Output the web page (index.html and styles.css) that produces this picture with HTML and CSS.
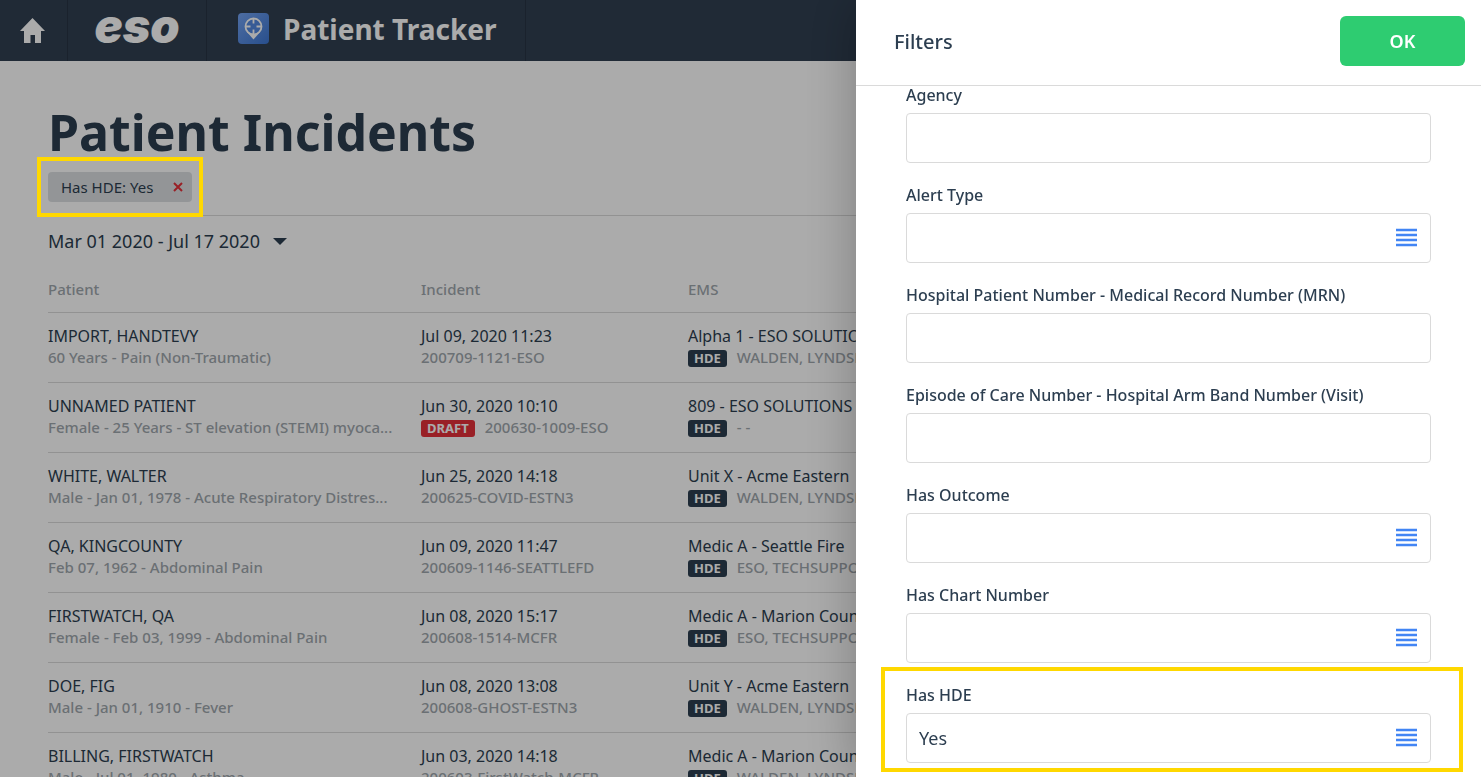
FILE: index.html
```html
<!DOCTYPE html>
<html lang="en">
<head>
<meta charset="utf-8">
<meta name="viewport" content="width=device-width, initial-scale=1.0">
<title>Patient Tracker</title>
<link rel="stylesheet" href="styles.css">
</head>
<body>

<header class="topbar">
  <a class="topbar-home" href="#" aria-label="Home">
    <svg width="25" height="25" viewBox="0 0 25 25"><path fill="currentColor" d="M12.500 0 L25 13 H21 V25 H15 V17 H10.500 V25 H4 V13 H0 Z"/></svg>
  </a>
  <a class="topbar-logo" href="#">eso</a>
  <a class="topbar-app" href="#">
    <svg width="31" height="31" viewBox="0 0 31 31">
      <defs>
        <linearGradient id="tile" x1="0" y1="0" x2="1" y2="1">
          <stop offset="0" stop-color="#74a3f2"/>
          <stop offset="1" stop-color="#3c76d2"/>
        </linearGradient>
      </defs>
      <rect width="31" height="31" rx="4" fill="url(#tile)"/>
      <path d="M9 19 L15.500 26.500 L22 19 Z" fill="#fff"/>
      <circle cx="15.500" cy="13.500" r="8" fill="#5288e0" stroke="#fff" stroke-width="1.800"/>
      <path d="M15.500 5.500 V10.500 M15.500 16.500 V21.500 M7.500 13.500 H12.500 M18.500 13.500 H23.500" stroke="#fff" stroke-width="1.800"/>
    </svg>
    <span>Patient Tracker</span>
  </a>
</header>

<main class="content">
  <h1>Patient Incidents</h1>

  <div class="chips">
    <div class="chip">
      <span>Has HDE: Yes</span>
      <button class="chip-remove" type="button" aria-label="Remove filter">
        <svg width="10" height="10" viewBox="0 0 10 10"><path d="M1 1 L9 9 M9 1 L1 9" stroke="currentColor" stroke-width="2"/></svg>
      </button>
      <div class="highlight highlight-chip"></div>
    </div>
  </div>

  <button class="date-range" type="button">
    Mar 01 2020 - Jul 17 2020
    <svg width="14" height="7" viewBox="0 0 14 7"><path fill="currentColor" d="M0 0 H14 L7 7 Z"/></svg>
  </button>

  <table class="incidents">
    <colgroup>
      <col class="col-patient">
      <col class="col-incident">
      <col>
    </colgroup>
    <thead>
      <tr><th>Patient</th><th>Incident</th><th>EMS</th></tr>
    </thead>
    <tbody>
      <tr>
        <td><div class="main">IMPORT, HANDTEVY</div><div class="sub">60 Years - Pain (Non-Traumatic)</div></td>
        <td><div class="main">Jul 09, 2020 11:23</div><div class="sub">200709-1121-ESO</div></td>
        <td><div class="main">Alpha 1 - ESO SOLUTIONS</div><div class="sub"><span class="tag">HDE</span>WALDEN, LYNDSEY</div></td>
      </tr>
      <tr>
        <td><div class="main">UNNAMED PATIENT</div><div class="sub">Female - 25 Years - ST elevation (STEMI) myoca...</div></td>
        <td><div class="main">Jun 30, 2020 10:10</div><div class="sub"><span class="tag tag-draft">DRAFT</span>200630-1009-ESO</div></td>
        <td><div class="main">809 - ESO SOLUTIONS</div><div class="sub"><span class="tag">HDE</span>- -</div></td>
      </tr>
      <tr>
        <td><div class="main">WHITE, WALTER</div><div class="sub">Male - Jan 01, 1978 - Acute Respiratory Distres...</div></td>
        <td><div class="main">Jun 25, 2020 14:18</div><div class="sub">200625-COVID-ESTN3</div></td>
        <td><div class="main">Unit X - Acme Eastern</div><div class="sub"><span class="tag">HDE</span>WALDEN, LYNDSEY</div></td>
      </tr>
      <tr>
        <td><div class="main">QA, KINGCOUNTY</div><div class="sub">Feb 07, 1962 - Abdominal Pain</div></td>
        <td><div class="main">Jun 09, 2020 11:47</div><div class="sub">200609-1146-SEATTLEFD</div></td>
        <td><div class="main">Medic A - Seattle Fire</div><div class="sub"><span class="tag">HDE</span>ESO, TECHSUPPORT</div></td>
      </tr>
      <tr>
        <td><div class="main">FIRSTWATCH, QA</div><div class="sub">Female - Feb 03, 1999 - Abdominal Pain</div></td>
        <td><div class="main">Jun 08, 2020 15:17</div><div class="sub">200608-1514-MCFR</div></td>
        <td><div class="main">Medic A - Marion County</div><div class="sub"><span class="tag">HDE</span>ESO, TECHSUPPORT</div></td>
      </tr>
      <tr>
        <td><div class="main">DOE, FIG</div><div class="sub">Male - Jan 01, 1910 - Fever</div></td>
        <td><div class="main">Jun 08, 2020 13:08</div><div class="sub">200608-GHOST-ESTN3</div></td>
        <td><div class="main">Unit Y - Acme Eastern</div><div class="sub"><span class="tag">HDE</span>WALDEN, LYNDSEY</div></td>
      </tr>
      <tr>
        <td><div class="main">BILLING, FIRSTWATCH</div><div class="sub">Male - Jul 01, 1980 - Asthma</div></td>
        <td><div class="main">Jun 03, 2020 14:18</div><div class="sub">200603-FirstWatch-MCFR</div></td>
        <td><div class="main">Medic A - Marion County</div><div class="sub"><span class="tag">HDE</span>WALDEN, LYNDSEY</div></td>
      </tr>
    </tbody>
  </table>
</main>

<div class="overlay"></div>

<aside class="panel">
  <div class="panel-header">
    <h2>Filters</h2>
    <button class="ok" type="button">OK</button>
  </div>
  <form class="panel-body">
    <div class="field">
      <label for="agency">Agency</label>
      <input id="agency" type="text">
    </div>
    <div class="field">
      <label for="alertType">Alert Type</label>
      <div class="picker">
        <select id="alertType"><option></option></select>
        <svg width="21" height="19" viewBox="0 0 21 19"><path d="M0 2 H21 M0 7 H21 M0 12 H21 M0 17 H21" stroke="currentColor" stroke-width="2.500"/></svg>
      </div>
    </div>
    <div class="field">
      <label for="mrn">Hospital Patient Number - Medical Record Number (MRN)</label>
      <input id="mrn" type="text">
    </div>
    <div class="field">
      <label for="visit">Episode of Care Number - Hospital Arm Band Number (Visit)</label>
      <input id="visit" type="text">
    </div>
    <div class="field">
      <label for="hasOutcome">Has Outcome</label>
      <div class="picker">
        <select id="hasOutcome"><option></option><option>Yes</option><option>No</option></select>
        <svg width="21" height="19" viewBox="0 0 21 19"><path d="M0 2 H21 M0 7 H21 M0 12 H21 M0 17 H21" stroke="currentColor" stroke-width="2.500"/></svg>
      </div>
    </div>
    <div class="field">
      <label for="hasChart">Has Chart Number</label>
      <div class="picker">
        <select id="hasChart"><option></option><option>Yes</option><option>No</option></select>
        <svg width="21" height="19" viewBox="0 0 21 19"><path d="M0 2 H21 M0 7 H21 M0 12 H21 M0 17 H21" stroke="currentColor" stroke-width="2.500"/></svg>
      </div>
    </div>
    <div class="field">
      <label for="hasHde">Has HDE</label>
      <div class="picker">
        <select id="hasHde"><option></option><option selected>Yes</option><option>No</option></select>
        <svg width="21" height="19" viewBox="0 0 21 19"><path d="M0 2 H21 M0 7 H21 M0 12 H21 M0 17 H21" stroke="currentColor" stroke-width="2.500"/></svg>
      </div>
      <div class="highlight highlight-field"></div>
    </div>
  </form>
</aside>

</body>
</html>
```
FILE: styles.css
```css
* {
  box-sizing: border-box;
}

html, body {
  height: 100%;
}

body {
  margin: 0;
  overflow: hidden;
  background: #fff;
  color: #2c3e50;
  font: 16px "Noto Sans", sans-serif;
}

button, input, select {
  font: inherit;
  color: inherit;
}

/* top bar */
.topbar {
  display: flex;
  height: 61px;
  background: #303f51;
}

.topbar a {
  display: flex;
  align-items: center;
  justify-content: center;
  border-right: 1px solid #273443;
  color: #fff;
  text-decoration: none;
}

.topbar-home {
  width: 68px;
  padding-right: 3px;
}

.topbar .topbar-logo {
  width: 139px;
  padding-bottom: 10px;
  font: italic 900 47px/47px Inter, sans-serif;
}

.topbar-app {
  gap: 14px;
  padding: 0 28px 4px 31px;
  font-size: 28px;
  font-weight: 700;
}

/* page content */
.content {
  padding: 36px 48px 0;
}

h1 {
  margin: 0;
  font-size: 50px;
  font-weight: 700;
  line-height: 70px;
}

.chips {
  display: flex;
  padding: 5px 0 13px;
  border-bottom: 1px solid #dadada;
}

.chip {
  position: relative;
  display: flex;
  align-items: center;
  gap: 20px;
  height: 30px;
  padding: 0 9px 0 13px;
  border-radius: 4px;
  background: #dcdfe2;
  font-size: 15px;
}

.chip-remove {
  display: flex;
  padding: 0;
  border: 0;
  background: none;
  color: #e5303a;
}

.date-range {
  display: flex;
  align-items: center;
  gap: 13px;
  margin-top: 12px;
  padding: 0;
  border: 0;
  background: none;
  font-size: 18px;
  line-height: 26px;
}

/* incidents table */
.incidents {
  width: 100%;
  margin-top: 22px;
  table-layout: fixed;
  border-collapse: collapse;
}

.col-patient {
  width: 373px;
}

.col-incident {
  width: 267px;
}

.incidents th {
  height: 36px;
  padding: 0 0 10px;
  border-bottom: 1px solid #dadada;
  color: #9fa7ad;
  font-size: 15px;
  font-weight: 500;
  line-height: 20px;
  text-align: left;
}

.incidents td {
  height: 70px;
  padding: 12px 0 14px;
  border-bottom: 1px solid #dadada;
  vertical-align: top;
  white-space: nowrap;
}

.main {
  line-height: 22px;
}

.sub {
  display: flex;
  align-items: flex-end;
  gap: 10px;
  color: #9fa7ad;
  font-size: 15px;
  font-weight: 500;
  line-height: 20px;
}

.tag {
  padding: 0 6px;
  border-radius: 3px;
  background: #2c3e50;
  color: #fff;
  font-size: 13px;
  font-weight: 700;
  line-height: 17px;
}

.tag-draft {
  background: #e5303a;
}

.overlay {
  position: fixed;
  inset: 0;
  z-index: 1;
  background: rgba(0, 0, 0, 0.33);
}

/* filter panel */
.panel {
  position: fixed;
  top: 0;
  right: 0;
  bottom: 0;
  z-index: 2;
  display: flex;
  flex-direction: column;
  width: 625px;
  background: #fff;
  box-shadow: 0 0 50px rgba(0, 0, 0, 0.28);
}

.panel-header {
  display: flex;
  align-items: center;
  justify-content: space-between;
  padding: 16px 16px 19px 38px;
  border-bottom: 1px solid #dadada;
}

.panel-header h2 {
  margin: 0;
  font-size: 20px;
  font-weight: 500;
}

.ok {
  width: 125px;
  height: 50px;
  border: 0;
  border-radius: 6px;
  background: #2ecc71;
  color: #fff;
  font-size: 18px;
  font-weight: 600;
}

.panel-body {
  flex: 1;
  overflow: hidden;
  padding: 0 50px;
}

.field {
  position: relative;
  margin-bottom: 23px;
}

.field label {
  display: block;
  margin-bottom: 9px;
  font-weight: 500;
  line-height: 18px;
}

.field input, .field select {
  display: block;
  width: 100%;
  height: 50px;
  padding: 0 12px;
  border: 1px solid #dadada;
  border-radius: 4px;
  background: #fff;
  font-size: 18px;
  appearance: none;
}

.picker {
  position: relative;
}

.picker svg {
  position: absolute;
  top: 15px;
  right: 14px;
  color: #4285f4;
  pointer-events: none;
}

/* call-out frames */
.highlight {
  position: absolute;
  z-index: 2;
  border: 4px solid #ffd800;
  pointer-events: none;
}

.highlight-chip {
  inset: -15px -11px;
}

.highlight-field {
  inset: -19px -32px -9px -25px;
}
```
